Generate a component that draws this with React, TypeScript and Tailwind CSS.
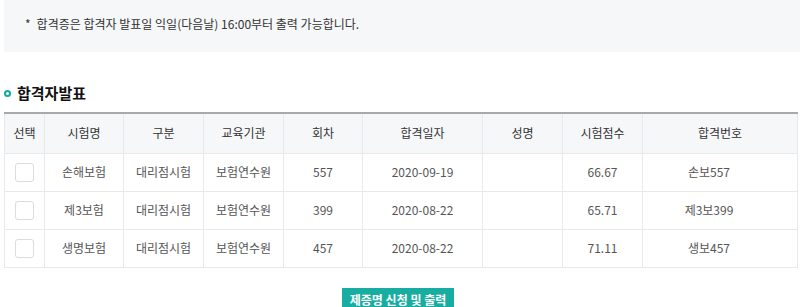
import React from "react";

const rows = [
  { name: "손해보험", type: "대리점시험", org: "보험연수원", round: "557", date: "2020-09-19", score: "66.67", no: "손보557" },
  { name: "제3보험", type: "대리점시험", org: "보험연수원", round: "399", date: "2020-08-22", score: "65.71", no: "제3보399" },
  { name: "생명보험", type: "대리점시험", org: "보험연수원", round: "457", date: "2020-08-22", score: "71.11", no: "생보457" },
];

const headers = ["선택", "시험명", "구분", "교육기관", "회차", "합격일자", "성명", "시험점수", "합격번호"];
const widths = ["w-[40px]", "w-[79px]", "w-[80px]", "w-[80px]", "w-[79px]", "w-[120px]", "w-[80px]", "w-[80px]", ""];

export default function App() {
  return (
    <div className="w-[800px] h-[307px] overflow-hidden bg-white text-[#333]" style={{ fontFamily: '"Noto Sans CJK KR", "Noto Sans", sans-serif' }}>
      <div className="ml-[4px] h-[52px] bg-[#f6f7f9] flex items-center pl-[21px] text-[12px] text-[#333] pb-[4px]">
        <span className="mr-[6px]">*</span>
        <span>합격증은 합격자 발표일 익일(다음날) 16:00부터 출력 가능합니다.</span>
      </div>
      <div className="ml-[4px] mt-[29px] flex items-center h-[24px]">
        <span className="w-[7px] h-[7px] rounded-full border-[2px] border-[#13a89e] mr-[6px]"></span>
        <span className="text-[15px] font-bold text-[#111]">합격자발표</span>
      </div>
      <div className="ml-[4px] mr-[2px] mt-[7px]">
        <table className="w-full border-collapse table-fixed text-[12px]">
          <thead>
            <tr className="h-[40px] bg-[#f6f7f9] border-t-[2px] border-t-[#a9a9a9]">
              {headers.map((h, i) => (
                <th key={h} className={`${widths[i]} font-normal text-[#333] border-x border-[#e8e9ec] border-b`}>{h}</th>
              ))}
            </tr>
          </thead>
          <tbody>
            {rows.map((r) => (
              <tr key={r.name} className="h-[38px] text-[#555]">
                <td className="border border-[#e8e9ec]">
                  <div className="w-[19px] h-[19px] border border-[#dcdcdc] rounded-[3px] bg-white ml-[10px]"></div>
                </td>
                <td className="border border-[#e8e9ec] text-center">{r.name}</td>
                <td className="border border-[#e8e9ec] text-center">{r.type}</td>
                <td className="border border-[#e8e9ec] text-center">{r.org}</td>
                <td className="border border-[#e8e9ec] text-center">{r.round}</td>
                <td className="border border-[#e8e9ec] text-center">{r.date}</td>
                <td className="border border-[#e8e9ec] text-center"></td>
                <td className="border border-[#e8e9ec] text-center">{r.score}</td>
                <td className="border border-[#e8e9ec] text-center pr-[22px]">{r.no}</td>
              </tr>
            ))}
          </tbody>
        </table>
      </div>
      <div className="flex justify-center mt-[20px] pr-[4px]">
        <button className="w-[112px] h-[30px] bg-[#17ada0] text-white text-[12px] font-bold pb-[6px]">제증명 신청 및 출력</button>
      </div>
    </div>
  );
}
